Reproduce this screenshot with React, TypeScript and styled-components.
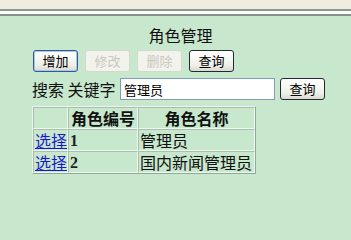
import React from "react";
import styled, { createGlobalStyle } from "styled-components";

const GlobalStyle = createGlobalStyle`
  html, body {
    margin: 0;
    padding: 0;
    background: #c8e8cd;
  }
  body {
    font-family: "Noto Sans CJK SC", "Liberation Sans", sans-serif;
    font-size: 16px;
    color: #111;
  }
`;

const Page = styled.div`
  width: 351px;
  height: 202px;
  overflow: hidden;
  background: #c8e8cd;
`;

const TopBar = styled.div`
  height: 9px;
  background: #efece0;
  border-bottom: 2px solid #8c9890;
`;

const TopGap = styled.div`
  height: 3px;
  background: #fbfdfb;
  border-bottom: 2px solid #86928a;
`;

const Content = styled.div`
  padding: 8px 0 0 32px;
  display: flex;
  flex-direction: column;
`;

const Title = styled.div`
  text-align: center;
  font-size: 16px;
  line-height: 22px;
  height: 22px;
  margin-left: -32px;
  padding-left: 10px;
`;

const Toolbar = styled.div`
  display: flex;
  gap: 7px;
  margin-top: 4px;
  padding-left: 1px;
`;

const Button = styled.button<{ $primary?: boolean }>`
  width: 45px;
  height: 22px;
  padding: 0;
  font-family: "Noto Sans CJK SC", "Liberation Sans", sans-serif;
  font-size: 13px;
  line-height: 18px;
  color: #000;
  border-radius: 3px;
  border: 1px solid ${(p) => (p.$primary ? "#2f5b8f" : "#1f2a33")};
  background: linear-gradient(#ffffff, #f0f0ea 70%, #d9d9d0);
  box-shadow: ${(p) => (p.$primary ? "inset 0 0 0 1px #a9c6ee" : "none")};

  &:disabled {
    color: #c9c7bb;
    border-color: #d6d8cc;
    background: #f3f3ee;
  }
`;

const SearchRow = styled.div`
  display: flex;
  align-items: center;
  margin-top: 6px;
  height: 22px;
`;

const Label = styled.span`
  font-size: 16px;
  width: 88px;
  white-space: nowrap;
`;

const SearchInput = styled.input`
  width: 155px;
  height: 22px;
  box-sizing: border-box;
  border: 1px solid #7f9db9;
  padding: 1px 3px;
  font-family: "Noto Sans CJK SC", sans-serif;
  font-size: 13px;
  background: #fff;
  outline: none;
`;

const SearchButton = styled(Button)`
  margin-left: 5px;
`;

const Table = styled.table`
  margin-top: 6px;
  table-layout: fixed;
  border-collapse: separate;
  border-spacing: 0;
  border: 1px solid;
  border-color: #eaf6ec #8fa898 #8fa898 #eaf6ec;
  width: 222px;
  line-height: 18px;
`;

const Col = styled.col<{ $w: number }>`
  width: ${(p) => p.$w}px;
`;

const Th = styled.th`
  height: 20px;
  padding: 0;
  font-weight: bold;
  text-align: center;
  white-space: nowrap;
  border: 1px solid;
  border-color: #a8bfae #eef8f0 #eef8f0 #a8bfae;
`;

const Td = styled.td`
  height: 20px;
  padding: 0 1px;
  white-space: nowrap;
  overflow: hidden;
  border: 1px solid;
  border-color: #a8bfae #eef8f0 #eef8f0 #a8bfae;
`;

const Num = styled.span`
  font-family: "Liberation Serif", serif;
  font-weight: bold;
  color: #222;
`;

const Link = styled.a`
  color: #1a1acc;
  text-decoration: underline;
  cursor: pointer;
`;

const roles = [
  { id: 1, name: "管理员" },
  { id: 2, name: "国内新闻管理员" },
];

const App = () => {
  const [keyword, setKeyword] = React.useState("管理员");

  return (
    <Page>
      <GlobalStyle />
      <TopBar />
      <TopGap />
      <Content>
        <Title>角色管理</Title>
        <Toolbar>
          <Button $primary>增加</Button>
          <Button disabled>修改</Button>
          <Button disabled>删除</Button>
          <Button>查询</Button>
        </Toolbar>
        <SearchRow>
          <Label>搜索 关键字</Label>
          <SearchInput
            value={keyword}
            onChange={(e) => setKeyword(e.target.value)}
          />
          <SearchButton>查询</SearchButton>
        </SearchRow>
        <Table>
          <colgroup>
            <Col $w={35} />
            <Col $w={70} />
            <Col $w={117} />
          </colgroup>
          <thead>
            <tr>
              <Th />
              <Th>角色编号</Th>
              <Th>角色名称</Th>
            </tr>
          </thead>
          <tbody>
            {roles.map((r) => (
              <tr key={r.id}>
                <Td>
                  <Link>选择</Link>
                </Td>
                <Td>
                  <Num>{r.id}</Num>
                </Td>
                <Td>{r.name}</Td>
              </tr>
            ))}
          </tbody>
        </Table>
      </Content>
    </Page>
  );
};

export default App;
